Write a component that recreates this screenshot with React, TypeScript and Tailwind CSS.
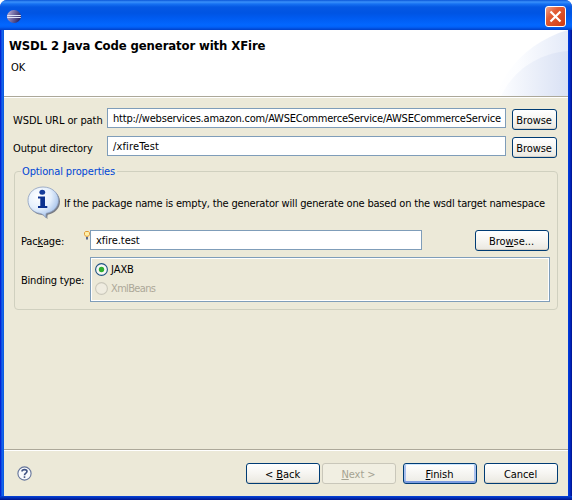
import React from "react";

type Kids = { children?: React.ReactNode; className?: string };

function Label({ children, className = "" }: Kids) {
  return <span className={`block whitespace-pre leading-[14px] ${className}`}>{children}</span>;
}

function Field({ children, className = "" }: Kids) {
  return (
    <div className={`h-5 border border-[#7f9db9] bg-white pl-[5px] ${className}`}>
      <div className="whitespace-pre leading-[19px]">{children}</div>
    </div>
  );
}

function Button({ children, className = "", kind = "normal" }: Kids & { kind?: "normal" | "default" | "disabled" }) {
  const look =
    kind === "disabled"
      ? "border-[#c9c7ba] bg-[#f1efe2] text-[#a5a392]"
      : kind === "default"
        ? "border-[#003c74] bg-gradient-to-b from-white to-[#ecebe4] shadow-[inset_0_1px_0_#cee7ff,inset_0_-2px_0_#7d9ce0,inset_2px_0_0_#a9c0ee,inset_-2px_0_0_#a9c0ee]"
        : "border-[#003c74] bg-gradient-to-b from-white via-[#f6f5f1] to-[#eae8e0] shadow-[inset_0_-1px_0_#d6d0c5]";
  return (
    <button className={`flex h-[21px] items-center justify-center whitespace-pre rounded-[3px] border pt-[2px] pr-px leading-[14px] ${look} ${className}`}>
      <span>{children}</span>
    </button>
  );
}

function U({ children }: Kids) {
  return <span className="underline underline-offset-[1px]">{children}</span>;
}

function EclipseLogo() {
  return (
    <svg width="16" height="16" viewBox="0 0 16 16">
      <defs>
        <linearGradient id="ecl" x1="0" x2="1" y2="0.4">
          <stop offset="0" stopColor="#e0c6d4" />
          <stop offset=".35" stopColor="#8d84b8" />
          <stop offset="1" stopColor="#2f2a6b" />
        </linearGradient>
      </defs>
      <ellipse cx="8" cy="7.500" rx="7" ry="6.500" fill="url(#ecl)" />
      <path d="M1.200 6.500h13.600M1.200 8.500h13.600" stroke="#dfe5f8" strokeWidth="1" />
    </svg>
  );
}

function InfoIcon() {
  return (
    <svg width="34" height="34" viewBox="0 0 34 34" className="-mt-px shrink-0">
      <defs>
        <radialGradient id="bub" cx=".35" cy=".3" r=".75">
          <stop offset="0" stopColor="#ffffff" />
          <stop offset=".55" stopColor="#e4effc" />
          <stop offset="1" stopColor="#9dbce8" />
        </radialGradient>
      </defs>
      <path d="M17 2.500C8.500 2.500 2 8 2 15.500c0 7 4.500 12 12 13.300 3 .5 4 1.500 6.500 4.500-.2-2-.2-3 .3-4.500C28 27.500 33 22 33 15.500 33 8 26 2.500 17 2.500Z" fill="#5d6270" opacity=".8" />
      <path d="M16 1C7.500 1 1 6.800 1 14.200c0 7 4.500 12 12 13.300 2.500.5 3.800 1.500 6 4.300-.2-2-.2-3 .3-4.500C26.500 26 31.500 21 31.500 14.200 31.500 6.800 25 1 16 1Z" fill="url(#bub)" stroke="#8b9dbd" strokeWidth=".8" />
      <ellipse cx="15.300" cy="6.300" rx="2.900" ry="2.500" fill="#143c9b" />
      <path d="M11 10.500h7v9.500h2.300v2h-9.300v-2h2.300v-7.500H11Z" fill="#0b318f" />
    </svg>
  );
}

function HelpIcon() {
  return (
    <svg width="15" height="15" viewBox="0 0 15 15" fill="none" className="-mt-px">
      <circle cx="7.500" cy="7.500" r="6.600" fill="#f8f9fc" stroke="#65759b" strokeWidth="1.100" />
      <path d="M5 5.600C5 3 10 3 10 5.600 10 7.200 7.500 7.100 7.500 9.300" stroke="#3e5182" strokeWidth="1.600" />
      <path d="M6.700 10.300h1.600v1.600H6.700Z" fill="#3e5182" />
    </svg>
  );
}

function Bulb() {
  return (
    <svg width="6" height="9" viewBox="0 0 6 9" className="mt-px">
      <path d="M1.500.5h3L5.500 1.700v2L4.300 5.300H1.700L.5 3.700v-2Z" fill="#fff0a8" stroke="#e09a38" />
      <path d="M2 6h2v2.500H2Z" fill="#596a92" />
    </svg>
  );
}

function Radio({ on }: { on?: boolean }) {
  return (
    <svg width="13" height="13" viewBox="0 0 13 13">
      <circle cx="6.500" cy="6.500" r="5.900" fill={on ? "#f7f7f4" : "#efece0"} stroke={on ? "#1d5281" : "#cac8bb"} strokeWidth="1.100" />
      {on && <circle cx="6.500" cy="6.500" r="2.700" fill="#2fae2f" />}
    </svg>
  );
}

function Swoosh() {
  return (
    <svg width="72" height="66" viewBox="0 0 72 66" preserveAspectRatio="none">
      <defs>
        <linearGradient id="s1" x2="1">
          <stop offset="0" stopColor="#fff" />
          <stop offset=".3" stopColor="#fcfdff" />
          <stop offset="1" stopColor="#e4eaf8" />
        </linearGradient>
        <linearGradient id="s2" x2="1">
          <stop offset="0" stopColor="#fcfdff" />
          <stop offset="1" stopColor="#d9e1f4" />
        </linearGradient>
      </defs>
      <path d="M0 66C10 36 37 10 72 0v66Z" fill="url(#s1)" />
      <path d="M5 66C18 40 41 24 72 21v45Z" fill="url(#s2)" />
    </svg>
  );
}

export default function App() {
  return (
    <div className="h-[500px] w-[572px] overflow-hidden bg-white font-['DejaVu_Sans_Condensed','DejaVu_Sans',sans-serif] text-[11px] font-normal tracking-[-0.05px] [font-stretch:condensed] text-black">
      <div className="flex h-full flex-col overflow-hidden rounded-t-[7px] bg-[linear-gradient(90deg,#0019cf_0px,#0831d9_1px,#166aee_2px,#0855dd_4px,#0855dd_567px,#0040dc_568px,#0029c8_570px,#00138c_572px)]">
        <header className="flex h-[30px] shrink-0 items-center justify-between bg-[linear-gradient(180deg,#0a56d8_0px,#3a91fb_2px,#1671f2_4px,#0558e3_7px,#0054e3_13px,#005bf0_18px,#0267ff_25px,#0261f8_27px,#0040c8_30px)] pl-[6px] pr-[6px] pt-[3px]">
          <EclipseLogo />
          <button className="flex h-[21px] w-[21px] items-center justify-center rounded-[3px] border border-white bg-[linear-gradient(135deg,#f0a48c,#e25c35_35%,#cf3a12)]">
            <svg width="13" height="13" viewBox="0 0 13 13">
              <path d="M1.500 1.500l10 10M11.500 1.500l-10 10" stroke="#fff" strokeWidth="2.200" />
            </svg>
          </button>
        </header>

        <main className="mx-1 flex h-[466px] shrink-0 flex-col bg-[#ece9d8]">
          <section className="flex h-[66px] shrink-0 justify-between bg-white">
            <div className="pl-[5px] pt-[7px]">
              <h1 className="whitespace-pre text-[13px] font-bold leading-[17px] tracking-[-0.12px]">WSDL 2 Java Code generator with XFire</h1>
              <Label className="pl-[2px] pt-[7px]">OK</Label>
            </div>
            <Swoosh />
          </section>
          <div className="h-[2px] shrink-0 border-b border-t border-b-white border-t-[#aca899]" />

          <div className="mt-[10px] flex h-[22px] shrink-0 pl-[9px]">
            <Label className="w-[94px] pt-[6px] tracking-[-0.08px]">WSDL URL or path</Label>
            <Field className="w-[399px] tracking-[-0.21px]">http://webservices.amazon.com/AWSECommerceService/AWSECommerceService</Field>
            <Button className="ml-[6px] mt-px w-[45px]">Browse</Button>
          </div>
          <div className="mt-[6px] flex h-[22px] shrink-0 pl-[9px]">
            <Label className="w-[94px] pt-[6px] tracking-[-0.13px]">Output directory</Label>
            <Field className="w-[399px] tracking-[0.15px]">/xfireTest</Field>
            <Button className="ml-[6px] mt-px w-[45px]">Browse</Button>
          </div>

          <fieldset className="ml-[10px] mt-[6px] h-[146px] w-[544px] min-w-0 shrink-0 rounded-[4px] border border-[#d0d0bf] px-[6px]">
            <legend className="ml-0 h-[14px] pl-px pr-[2px] leading-[16px] tracking-[-0.13px] text-[#0046d5]">Optional properties</legend>
            <div className="mt-[8px] flex h-[34px] items-center pl-[6px]">
              <InfoIcon />
              <Label className="pl-[3px] pt-px tracking-[-0.18px]">If the package name is empty, the generator will generate one based on the wsdl target namespace</Label>
            </div>
            <div className="mt-[10px] flex h-[22px]">
              <Label className="w-[63px] pt-[5px] tracking-[-0.15px]">Pac<U>k</U>age:</Label>
              <Bulb />
              <Field className="w-[332px]">xfire.test</Field>
              <Button className="ml-[53px] w-[74px]">Bro<U>w</U>se...</Button>
            </div>
            <div className="mt-[5px] flex h-[45px] items-center">
              <Label className="w-[69px] pt-[2px] tracking-[-0.22px]">Binding type:</Label>
              <div className="h-[45px] w-[460px] border border-[#7f9db9] pl-[4px] pt-[3px] shadow-[inset_0_0_0_1px_#fff]">
                <div className="flex h-[16px] items-center gap-[3px]"><Radio on /><Label className="pt-[2px]">JAXB</Label></div>
                <div className="mt-[3px] flex h-[16px] items-center gap-[3px] tracking-[-0.65px] text-[#aca899]"><Radio /><Label className="pt-[2px]">XmlBeans</Label></div>
              </div>
            </div>
          </fieldset>

          <div className="mt-auto h-[2px] shrink-0 border-b border-t border-b-white border-t-[#aca899]" />
          <footer className="flex h-[45px] shrink-0 items-center pl-[13px] pr-[10px]">
            <HelpIcon />
            <div className="ml-auto flex">
              <Button className="w-[74px]">&lt; <U>B</U>ack</Button>
              <Button kind="disabled" className="ml-[2px] w-[74px]"><U>N</U>ext &gt;</Button>
              <Button kind="default" className="ml-[7px] w-[74px]"><U>F</U>inish</Button>
              <Button className="ml-[7px] w-[74px]">Cancel</Button>
            </div>
          </footer>
        </main>
        <div className="h-1 shrink-0 bg-gradient-to-b from-[#0844dc] to-[#00138c]" />
      </div>
    </div>
  );
}
